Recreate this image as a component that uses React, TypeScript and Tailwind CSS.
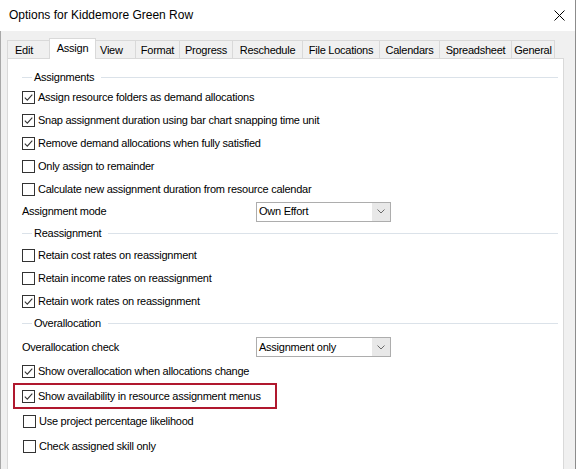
import React from 'react';

type TabDef = { label: string; cls: string; selected?: boolean };

const tabs: TabDef[] = [
  { label: 'Edit', cls: 'w-[42px] border-l pl-[7px]' },
  { label: 'Assign', cls: 'w-[47px] justify-center', selected: true },
  { label: 'View', cls: 'w-[39px] pl-[4px]' },
  { label: 'Format', cls: 'w-[44px] border-l justify-center' },
  { label: 'Progress', cls: 'w-[53px] border-l justify-center' },
  { label: 'Reschedule', cls: 'w-[70px] border-l justify-center' },
  { label: 'File Locations', cls: 'w-[77px] border-l justify-center' },
  { label: 'Calendars', cls: 'w-[60px] border-l justify-center' },
  { label: 'Spreadsheet', cls: 'w-[72px] border-l justify-center' },
  { label: 'General', cls: 'w-[44px] border-x justify-center' },
];

const Check = ({ checked }: { checked?: boolean }) => (
  <span className="w-[13px] h-[13px] shrink-0 border border-[#333333] bg-white flex">
    {checked && (
      <svg width="11" height="11" viewBox="0 0 11 11">
        <path d="M1.8 5.6 L4.3 8.1 L9.3 2.6" fill="none" stroke="#333333" strokeWidth="1.1" />
      </svg>
    )}
  </span>
);

const CheckRow = ({ label, checked, h, nudge }: { label: string; checked?: boolean; h: string; nudge?: boolean }) => (
  <div className={`flex items-center ${h} ${nudge ? 'pl-px' : ''}`}>
    <Check checked={checked} />
    <span className="ml-[3px] whitespace-nowrap">{label}</span>
  </div>
);

const Header = ({ label, h }: { label: string; h: string }) => (
  <div className={`flex items-center ${h}`}>
    <span className="w-[10px] h-px bg-[#dbe2e9]" />
    <span className="ml-[2px] whitespace-nowrap">{label}</span>
    <span className="flex-1 h-px ml-[7px] bg-[#dbe2e9]" />
  </div>
);

const Combo = ({ label, value, h }: { label: string; value: string; h: string }) => (
  <div className={`flex items-center ${h}`}>
    <span className="w-[234px] whitespace-nowrap">{label}</span>
    <div className="w-[135px] h-[20px] border border-[#adadad] bg-white flex">
      <span className="flex-1 pl-[2px] flex items-center whitespace-nowrap">{value}</span>
      <span className="w-[18px] bg-[#e8e8e8] flex items-center justify-center">
        <svg width="8" height="5" viewBox="0 0 8 5">
          <path d="M0.5 0.5 L4 4 L7.5 0.5" fill="none" stroke="#6a6a6a" strokeWidth="1" />
        </svg>
      </span>
    </div>
  </div>
);

const App = () => {
  return (
    <div className="w-[576px] h-[469px] overflow-hidden bg-[#f0f0f0] font-['Liberation_Sans',Arial,sans-serif] text-[11px] tracking-[-0.25px] text-black leading-[13px] border-r border-[#8c8c8c]">
      {/* title bar */}
      <div className="h-[31px] bg-white flex items-center justify-between pl-[9px] pr-[10px]">
        <span className="text-[12px] tracking-normal">Options for Kiddemore Green Row</span>
        <svg width="11" height="11" viewBox="0 0 11 11">
          <path d="M0.5 0.5 L10.5 10.5 M10.5 0.5 L0.5 10.5" stroke="#000" strokeWidth="1" />
        </svg>
      </div>

      <div className="border-l border-[#a8a8a8] h-full pt-[7px]">
        {/* tab strip */}
        <div className="flex items-end h-[20px] pl-[6px]">
          {tabs.map((t) =>
            t.selected ? (
              <div
                key={t.label}
                className={`relative z-10 h-[21px] -mb-px flex items-center border-x border-t border-[#d9d9d9] bg-white pb-[2px] ${t.cls}`}
              >
                {t.label}
              </div>
            ) : (
              <div
                key={t.label}
                className={`h-[18px] flex items-center pt-[1px] border-t border-[#d9d9d9] bg-[#f0f0f0] whitespace-nowrap ${t.cls}`}
              >
                {t.label}
              </div>
            )
          )}
        </div>

        {/* page */}
        <div className="ml-[6px] w-[557px] h-[420px] border border-[#d9d9d9] bg-white pt-[9px] pl-[14px] pr-[5px]">
          <Header label="Assignments" h="h-[18px]" />
          <CheckRow h="h-[23px]" checked label="Assign resource folders as demand allocations" />
          <CheckRow h="h-[23px]" checked label="Snap assignment duration using bar chart snapping time unit" />
          <CheckRow h="h-[23px]" checked label="Remove demand allocations when fully satisfied" />
          <CheckRow h="h-[23px]" label="Only assign to remainder" />
          <CheckRow h="h-[22px]" label="Calculate new assignment duration from resource calendar" />
          <Combo h="h-[23px]" label="Assignment mode" value="Own Effort" />

          <Header label="Reassignment" h="h-[21px]" />
          <CheckRow h="h-[23px]" label="Retain cost rates on reassignment" />
          <CheckRow h="h-[23px]" label="Retain income rates on reassignment" />
          <CheckRow h="h-[22px]" checked label="Retain work rates on reassignment" />

          <Header label="Overallocation" h="h-[23px]" />
          <Combo h="h-[24px]" label="Overallocation check" value="Assignment only" />
          <CheckRow h="h-[24px]" checked label="Show overallocation when allocations change" />
          <div className="relative">
            <span className="absolute left-[-9px] top-0 w-[264px] h-[26px] border-2 border-[#b0182e]" />
            <CheckRow h="h-[26px]" checked label="Show availability in resource assignment menus" />
          </div>
          <CheckRow h="h-[25px]" nudge label="Use project percentage likelihood" />
          <CheckRow h="h-[25px]" nudge label="Check assigned skill only" />
        </div>
      </div>
    </div>
  );
};

export default App;
